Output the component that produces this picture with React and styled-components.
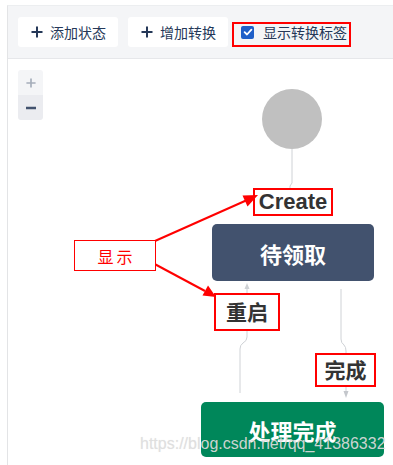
import React from "react";
import styled, { createGlobalStyle, css } from "styled-components";

const Global = createGlobalStyle`
  html, body { margin: 0; padding: 0; background: #fff; }
  body { font-family: "Noto Sans CJK SC", "Liberation Sans", sans-serif; }
  * { box-sizing: border-box; }
`;

const Page = styled.div`
  position: relative;
  width: 393px;
  height: 465px;
  overflow: hidden;
  padding: 5px 0 0 7px;
  background: #fff;
`;

const Frame = styled.div`
  height: 100%;
  display: flex;
  flex-direction: column;
  border-left: 1px solid #e3e4e6;
  border-top: 1px solid #eceef0;
`;

const Toolbar = styled.div`
  height: 53px;
  flex: none;
  display: flex;
  align-items: center;
  gap: 10px;
  padding: 0 10px;
  background: #f4f5f7;
  border-bottom: 1px solid #e6e7ea;
`;

const ToolButton = styled.button`
  height: 30px;
  display: flex;
  align-items: center;
  gap: 7px;
  padding: 0 12px 0 13px;
  border: none;
  border-radius: 3px;
  background: #fff;
  color: #253858;
  font-family: "Noto Sans CJK SC", sans-serif;
  font-size: 14px;
  line-height: 1;
`;

const CheckLabel = styled.label`
  display: flex;
  align-items: center;
  gap: 9px;
  margin-left: 3px;
  color: #253858;
  font-size: 14px;
`;

const CheckBox = styled.span`
  width: 13px;
  height: 13px;
  border-radius: 2px;
  background: #1f5fc8;
  display: flex;
  align-items: center;
  justify-content: center;
`;

const Canvas = styled.div`
  position: relative;
  flex: 1;
  background: #fff;
`;

const ZoomControls = styled.div`
  position: absolute;
  left: 10px;
  top: 11px;
  width: 25px;
  border-radius: 3px;
  overflow: hidden;
  display: flex;
  flex-direction: column;
`;

const ZoomButton = styled.div`
  height: 25px;
  display: flex;
  align-items: center;
  justify-content: center;
  background: ${(p) => (p.$active ? "#ebecf0" : "#f4f5f7")};
`;

const Connectors = styled.svg`
  position: absolute;
  left: 0;
  top: 0;
  width: 385px;
  height: 406px;
`;

const StartNode = styled.div`
  position: absolute;
  left: 254px;
  top: 30px;
  width: 60px;
  height: 60px;
  border-radius: 50%;
  background: #c0c0c0;
`;

const StateNode = styled.div`
  position: absolute;
  display: flex;
  align-items: center;
  justify-content: center;
  border-radius: 5px;
  color: #fff;
  font-family: "Noto Sans CJK SC", sans-serif;
  font-weight: 700;
  font-size: 22px;
  ${(p) =>
    p.$tone === "green"
      ? css`background: #00875a;`
      : css`background: #42526e;`}
`;

const EdgeLabel = styled.div`
  position: absolute;
  display: flex;
  align-items: center;
  justify-content: center;
  background: #fff;
  border: 2px solid #f00;
  color: #333;
  font-family: "Liberation Sans", "Noto Sans CJK SC", sans-serif;
  font-weight: 700;
  font-size: ${(p) => p.$size || 21}px;
  line-height: 1;
`;

const Annotations = styled.svg`
  position: absolute;
  left: 0;
  top: 0;
  width: 393px;
  height: 465px;
  pointer-events: none;
`;

const Callout = styled.div`
  position: absolute;
  left: 74px;
  top: 240px;
  width: 82px;
  height: 31px;
  border: 1px solid #f00;
  background: #fff;
  display: flex;
  align-items: center;
  justify-content: center;
  color: #f00;
  font-family: "Noto Sans CJK SC", serif;
  font-size: 16px;
  letter-spacing: 3px;
  padding-left: 3px;
`;

const Watermark = styled.div`
  position: absolute;
  left: 140px;
  top: 435px;
  font-family: "Liberation Sans", sans-serif;
  font-size: 16px;
  color: rgba(222, 222, 222, 0.92);
  text-shadow: 0 0 1px rgba(120, 120, 120, 0.15);
  white-space: nowrap;
  pointer-events: none;
`;

const Plus = ({ color = "#253858", size = 12, w = 2 }) => (
  <svg width={size} height={size} viewBox="0 0 12 12">
    <path d="M6 0.5V11.5M0.5 6H11.5" stroke={color} strokeWidth={w} />
  </svg>
);

const Tick = () => (
  <svg width="10" height="10" viewBox="0 0 10 10">
    <path d="M1.6 5.2L4 7.5L8.4 2.6" stroke="#fff" strokeWidth="1.8" fill="none" strokeLinecap="round" strokeLinejoin="round" />
  </svg>
);

export default function App() {
  const edge = "#cfd2d6";
  return (
    <>
      <Global />
      <Page>
        <Frame>
          <Toolbar>
            <ToolButton>
              <Plus />
              添加状态
            </ToolButton>
            <ToolButton>
              <Plus />
              增加转换
            </ToolButton>
            <CheckLabel>
              <CheckBox>
                <Tick />
              </CheckBox>
              显示转换标签
            </CheckLabel>
          </Toolbar>
          <Canvas>
            <ZoomControls>
              <ZoomButton>
                <Plus color="#a5adba" size={10} w={2} />
              </ZoomButton>
              <ZoomButton $active>
                <svg width="10" height="4" viewBox="0 0 10 4">
                  <path d="M0 2H10" stroke="#42526e" strokeWidth="2.4" />
                </svg>
              </ZoomButton>
            </ZoomControls>
            <Connectors viewBox="0 0 385 406">
              <path d="M284 90V124L282 127V132" stroke={edge} strokeWidth="1" fill="none" />
              <path d="M239 229V278Q239 282 235 284Q232 286 232 290V334" stroke={edge} strokeWidth="1" fill="none" />
              <path d="M239 224L236.5 230H241.5Z" fill={edge} />
              <path d="M333 230V280Q333 284 336 286Q338 288 338 292V332" stroke={edge} strokeWidth="1" fill="none" />
              <path d="M338 339L335.5 332H340.5Z" fill="#c4c7cc" />
            </Connectors>
            <StartNode />
            <StateNode $tone="dark" style={{ left: 204, top: 165, width: 162, height: 57 }}>
              待领取
            </StateNode>
            <StateNode $tone="green" style={{ left: 193, top: 343, width: 183, height: 55 }}>
              处理完成
            </StateNode>
            <EdgeLabel $size={22} style={{ left: 245, top: 129, width: 80, height: 28 }}>
              Create
            </EdgeLabel>
            <EdgeLabel style={{ left: 206, top: 234, width: 66, height: 38 }}>重启</EdgeLabel>
            <EdgeLabel style={{ left: 307, top: 294, width: 61, height: 34 }}>完成</EdgeLabel>
          </Canvas>
        </Frame>
        <Annotations viewBox="0 0 393 465">
          <rect x="233" y="23" width="117" height="23" fill="none" stroke="#f00" strokeWidth="2" />
          <path d="M146 245L246 200.5" stroke="#f00" strokeWidth="2" />
          <path d="M258 195L242.5 195.5L247.5 206.5Z" fill="#f00" />
          <path d="M149 261L205 291" stroke="#f00" strokeWidth="2" />
          <path d="M216 297L208 285.5L202.5 295.5Z" fill="#f00" />
        </Annotations>
        <Callout>显示</Callout>
        <Watermark>https://blog.csdn.net/qq_41386332</Watermark>
      </Page>
    </>
  );
}
